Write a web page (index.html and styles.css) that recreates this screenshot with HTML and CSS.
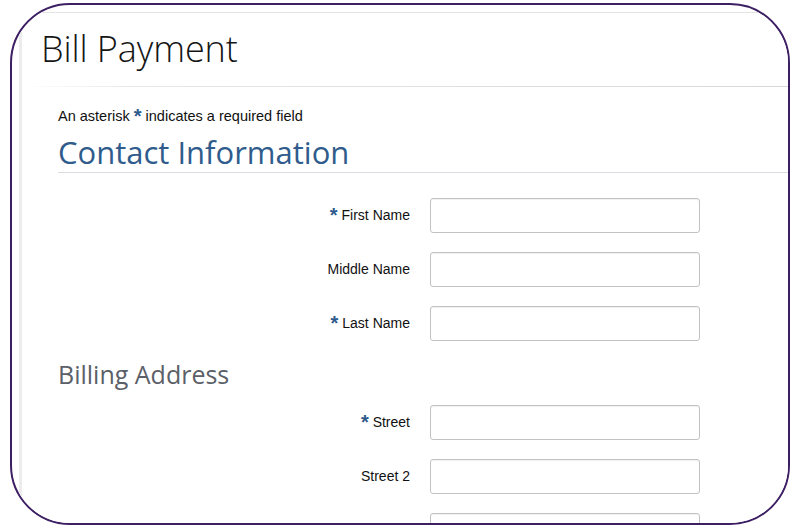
FILE: index.html
```html
<!DOCTYPE html>
<html>
<head>
<meta charset="utf-8">
<link rel="stylesheet" href="styles.css">
</head>
<body>
<div class="frame">
  <div class="page">
    <h1 class="title">Bill Payment</h1>
    <div class="title-rule"></div>
    <div class="content">
      <p class="note">An asterisk <span class="req">*</span> indicates a required field</p>
      <h2 class="section">Contact Information</h2>
      <div class="form">
        <label class="label"><span class="req">*</span> First Name</label>
        <div class="input"></div>
        <label class="label">Middle Name</label>
        <div class="input"></div>
        <label class="label"><span class="req">*</span> Last Name</label>
        <div class="input"></div>
      </div>
      <h3 class="subsection">Billing Address</h3>
      <div class="form form-billing">
        <label class="label"><span class="req">*</span> Street</label>
        <div class="input"></div>
        <label class="label">Street 2</label>
        <div class="input"></div>
        <label class="label"></label>
        <div class="input"></div>
      </div>
    </div>
  </div>
</div>
</body>
</html>
```

FILE: styles.css
```css
html, body {
  margin: 0;
  padding: 0;
  background: #ffffff;
}
body {
  width: 800px;
  height: 528px;
  overflow: hidden;
  font-family: "Liberation Sans", Arial, sans-serif;
}
.frame {
  box-sizing: border-box;
  margin: 3px 10px 0 10px;
  height: 522px;
  border: 2px solid #3d1f63;
  border-radius: 60px;
  overflow: hidden;
  background: #ffffff;
}
.page {
  margin: 7px 0 0 7px;
  height: 520px;
  border-top: 1px solid #e3e3e3;
  border-left: 3px solid #ececec;
  background: #ffffff;
}
.title {
  margin: 0;
  padding: 13px 0 0 19px;
  font-family: "Open Sans", sans-serif;
  font-weight: 300;
  font-size: 36px;
  line-height: 46px;
  color: #151515;
  letter-spacing: -0.1px;
}
.title-rule {
  height: 1px;
  margin-top: 14px;
  background: linear-gradient(to right, #ffffff 0px, #e6e6e6 120px, #d8d8d8 100%);
}
.content {
  padding-left: 36px;
}
.note {
  margin: 0;
  padding-top: 21px;
  font-size: 14.5px;
  line-height: 17px;
  color: #111111;
}
.req {
  color: #2d5a8c;
  font-weight: bold;
  font-size: 20px;
  line-height: 10px;
  vertical-align: -2px;
}
.section {
  margin: 0;
  padding-top: 7px;
  font-family: "Open Sans", sans-serif;
  font-weight: 400;
  font-size: 31px;
  line-height: 40px;
  color: #2f5c8c;
  border-bottom: 1px solid #dadde2;
}
.form {
  display: grid;
  grid-template-columns: 352px 270px;
  column-gap: 20px;
  row-gap: 19px;
  padding-top: 25px;
  align-items: center;
}
.label {
  text-align: right;
  font-size: 14px;
  line-height: 17px;
  color: #111111;
}
.input {
  box-sizing: border-box;
  height: 35px;
  border: 1px solid #c2c2c2;
  border-radius: 3px;
  background: #ffffff;
  box-shadow: inset 0 1px 1px rgba(0,0,0,0.06);
}
.subsection {
  margin: 0;
  padding-top: 17px;
  font-family: "Open Sans", sans-serif;
  font-weight: 400;
  font-size: 25px;
  line-height: 32px;
  color: #5b6068;
}
.form-billing {
  padding-top: 15px;
}
```
